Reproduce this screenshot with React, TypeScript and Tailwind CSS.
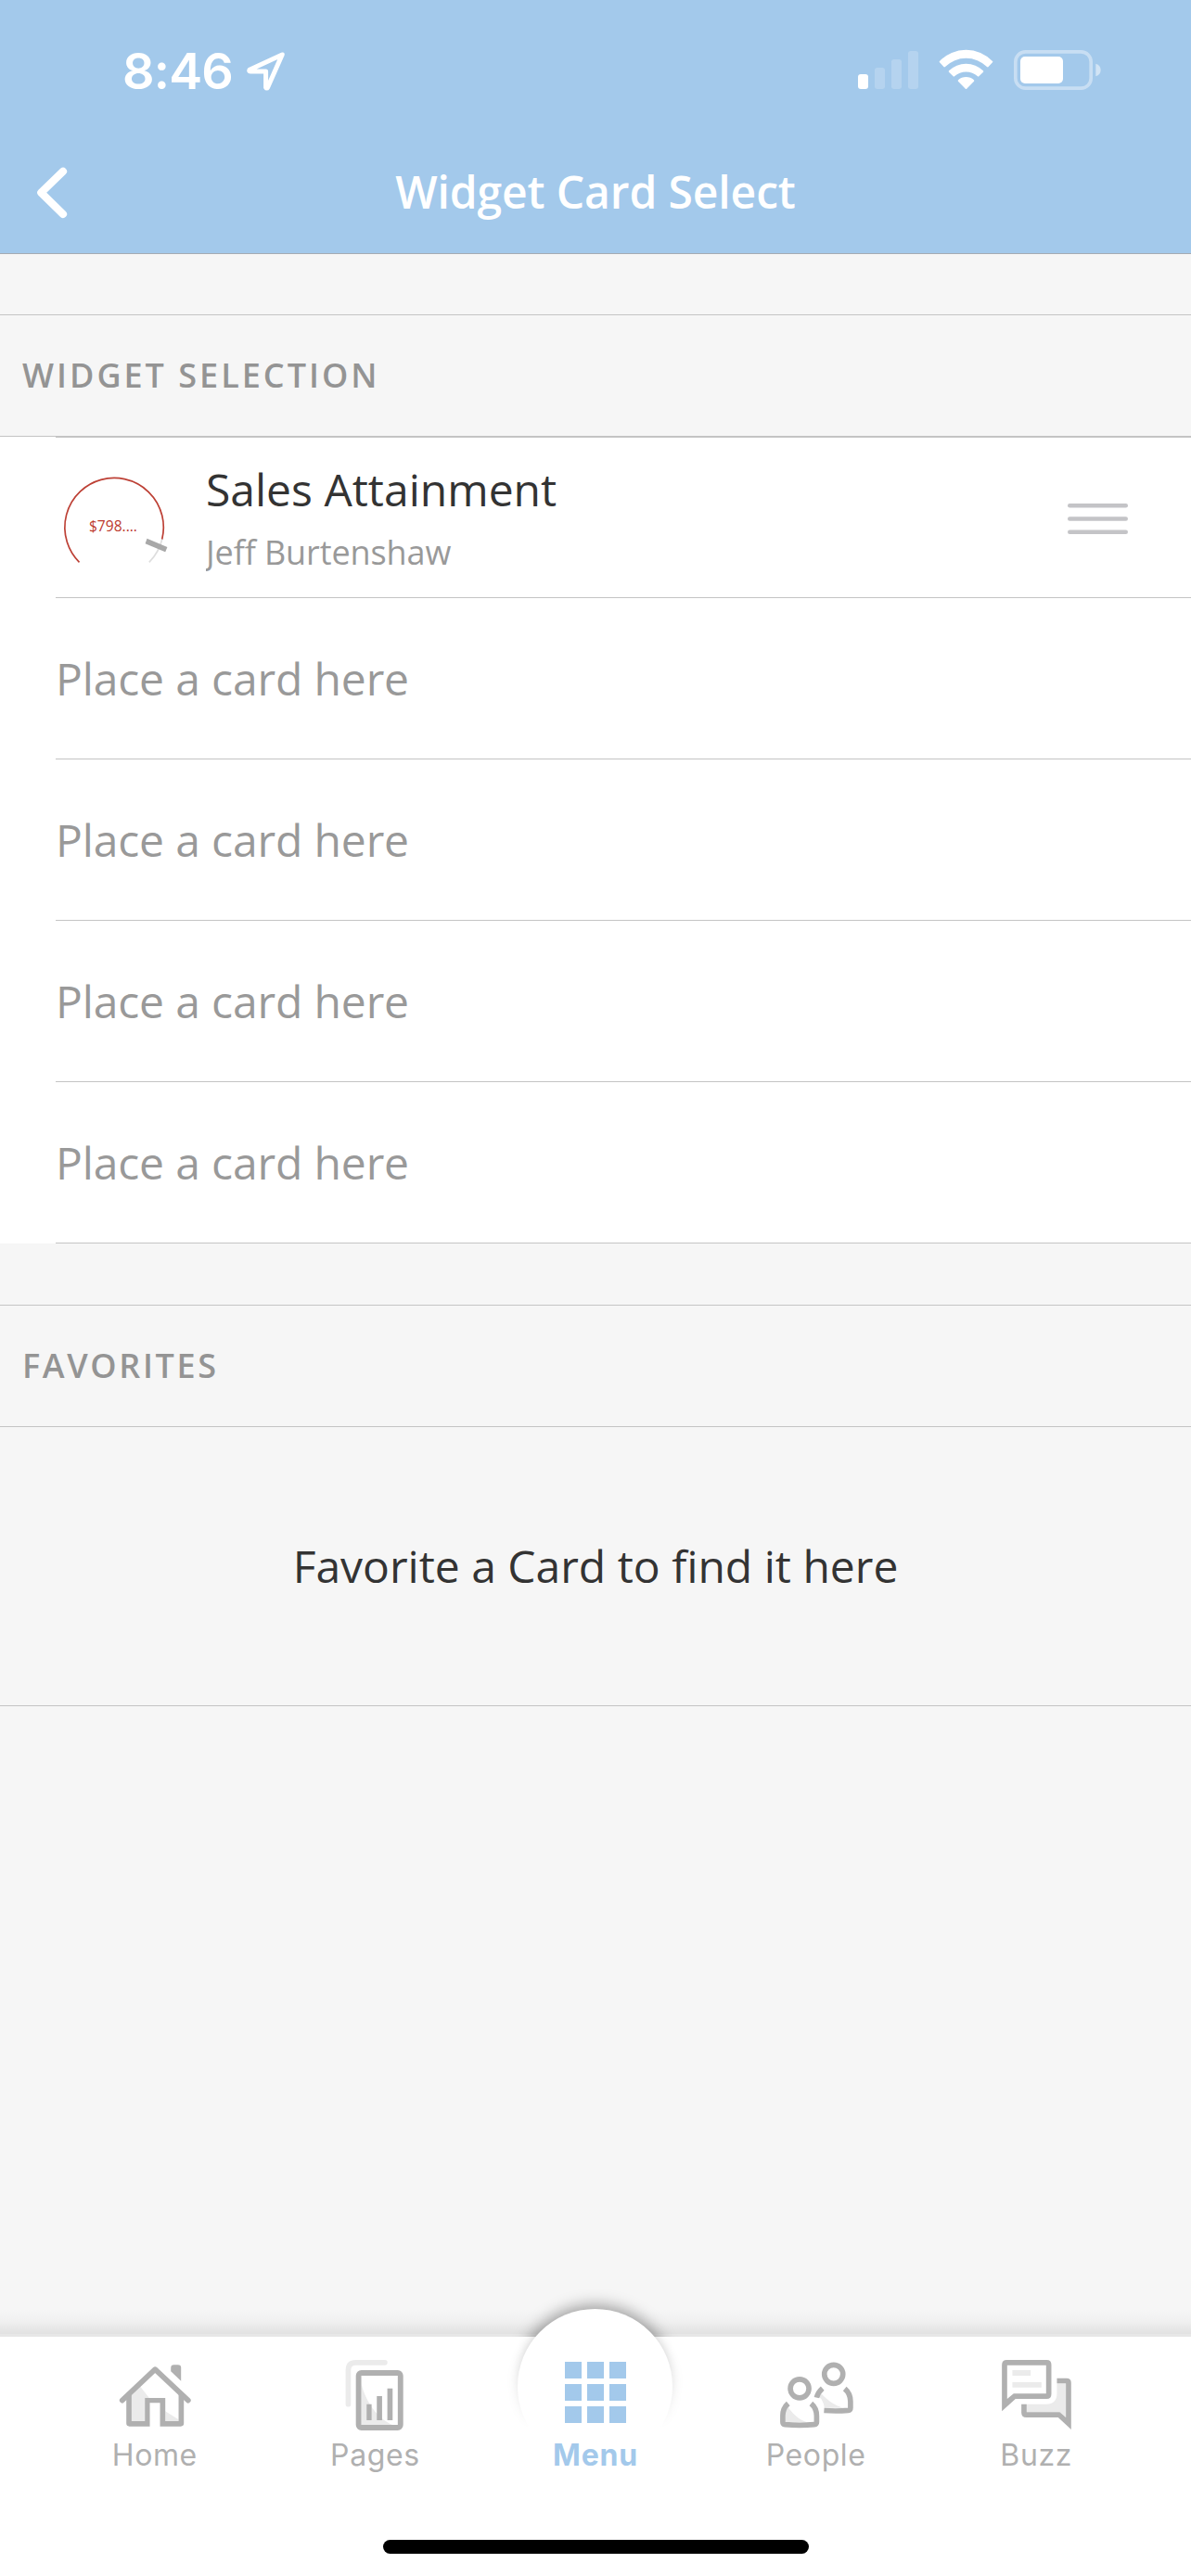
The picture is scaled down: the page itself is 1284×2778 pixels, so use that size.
import type { ReactNode } from "react";

const DARK = "#b0b0b0";
const LIGHT = "#ebebeb";

function LocationArrow() {
  return (
    <svg className="mt-2 ml-[11px] h-[48px] w-[48px]" viewBox="262 52 48 48" fill="none">
      <path
        d="M304.200 58.900 L269 75.200 Q268 76.900 270 77 H286.600 V94.200 Q287.600 96 288.600 94.200 Z"
        stroke="#fff"
        strokeWidth="5"
        strokeLinejoin="round"
      />
    </svg>
  );
}

function StatusIcons() {
  return (
    <svg className="h-[90px] w-[400px]" viewBox="0 0 1200 270" fill="#fff">
      <rect x="285" y="150" width="33" height="48" rx="9" />
      <g opacity="0.2">
        <rect x="339" y="129" width="33" height="69" rx="9" />
        <rect x="393" y="102" width="33" height="96" rx="9" />
        <rect x="447" y="75" width="33" height="123" rx="9" />
      </g>
      <path d="M549 112 Q547 110 549 108 A117.5 117.5 0 0 1 720 108 Q722 110 720 112 L706 127 Q704 128 702 126 A96 96 0 0 0 567 126 Q565 128 563 127 Z" />
      <path d="M579 143 Q577 141 579 139 A79 79 0 0 1 690 139 Q692 141 690 143 L676 157 Q674 159 672 157 A56 56 0 0 0 597 157 Q595 159 593 157 Z" />
      <path d="M609 173 Q607 171 609 169 A38 38 0 0 1 660 169 Q662 171 660 173 L636.5 197 Q634.5 199 632.5 197 Z" />
      <rect x="794.500" y="77.500" width="244" height="118" rx="32" fill="none" stroke="#fff" strokeWidth="11" opacity="0.4" />
      <rect x="810" y="93" width="138" height="87" rx="15" />
      <path d="M1054 116 Q1070 121 1070 136.500 Q1070 152 1054 157 Z" opacity="0.5" />
    </svg>
  );
}

function SectionHeader({ children }: { children: ReactNode }) {
  return (
    <h2 className="h-[132px] border-y border-[#c4c4c4] pt-10 pl-6 text-[36px] leading-[49px] font-semibold tracking-[3px] text-[#949494]">
      {children}
    </h2>
  );
}

function Gauge() {
  return (
    <svg className="h-[172px] w-[130px]" viewBox="60 472 130 172" fill="none">
      <path d="M174.900 581 A53.200 53.200 0 0 1 160.800 606.300" stroke="#dedede" strokeWidth="1.700" />
      <path d="M85.500 606.300 A53.200 53.200 0 1 1 174.700 581.500" stroke="#bd4035" strokeWidth="1.700" />
      <path d="M158.500 580.700 L180.400 590 L178.200 595.200 L156.600 586.200 Z" fill="#a8a8a8" />
      <text x="95.900" y="573.200" fontSize="15.600" fill="#bd3a2e" fontFamily="'Open Sans', sans-serif">
        $798....
      </text>
    </svg>
  );
}

function DragHandle() {
  return (
    <svg className="mt-[71px] mr-[68px] ml-auto h-[34px] w-[65px]" viewBox="0 0 65 34" fill="#c4c4c7">
      <rect x="0" y="0" width="65" height="4.400" rx="2.200" />
      <rect x="0" y="14.300" width="65" height="4.400" rx="2.200" />
      <rect x="0" y="28.600" width="65" height="4.400" rx="2.200" />
    </svg>
  );
}

function HomeIcon() {
  return (
    <svg className="h-[108px] w-[120px]" viewBox="80.4 120 360 324">
      <path d="M185 303 L212 280 L242 318 H228 V393 H185 Z M294 361 L337 388 V393 H294 Z" fill={LIGHT} />
      <path
        d="M168 303 L185 290 V393 H228 V318 H294 V393 H337 V290 L354 303 V400 Q354 410 344 410 H277 V334 H244 V410 H178 Q168 410 168 400 Z"
        fill={DARK}
      />
      <path d="M154.500 326 L261 225.500 L368 326" fill="none" stroke={DARK} strokeWidth="17" strokeLinecap="round" strokeLinejoin="round" />
      <path d="M312 221 Q312 211 322 211 H335 Q345 211 345 221 V263 L312 232 Z" fill={DARK} />
    </svg>
  );
}

function PagesIcon() {
  return (
    <svg className="h-[108px] w-[120px]" viewBox="793.2 120 360 324">
      <path d="M887.500 338 V228 Q887.500 203.500 912 203.500 H1006" fill="none" stroke={LIGHT} strokeWidth="17" strokeLinecap="round" />
      <path d="M930 272 C945 335 985 385 1032 406 H930 Z" fill={LIGHT} />
      <rect x="921" y="237" width="135.500" height="177" rx="9" fill="none" stroke={DARK} strokeWidth="17.500" />
      <path d="M947 338 H963 V390 H947 Z M980 312 H997 V390 H980 Z M1014 287 H1031 V390 H1014 Z" fill={DARK} />
    </svg>
  );
}

function MenuIcon() {
  const steps = [0, 72, 144];
  return (
    <svg className="h-[108px] w-[120px]" viewBox="246 180 360 324" fill="#a3c9eb">
      {steps.map((y) => steps.map((x) => <rect key={`${x}-${y}`} x={327 + x} y={261 + y} width="54" height="54" />))}
    </svg>
  );
}

function PeopleIcon() {
  return (
    <svg className="h-[108px] w-[120px]" viewBox="58.8 120 360 324" fill="none" stroke={DARK} strokeWidth="17">
      <path d="M246 306 L254 303 C275 325 298 343 326 350 H265 Q262 325 246 313 Z" fill={LIGHT} stroke="none" />
      <path d="M138 366 L147 346 C160 368 182 388 207 396 H138 Z" fill={LIGHT} stroke="none" />
      <circle cx="295" cy="241" r="30" />
      <circle cx="185" cy="287.500" r="30" />
      <path d="M148 336 Q130.500 351 130.500 376 V396 Q130.500 403 138 404 Q185 408.500 232 404 Q240 403 240 396 V376 Q240 351 222 336" />
      <path d="M240 317 Q244 300 259 287" />
      <path d="M331 288 Q349.500 304 349.500 329 V350 Q349.500 357 342 358 Q305 361.500 264 358.500" />
    </svg>
  );
}

function BuzzIcon() {
  return (
    <svg className="h-[108px] w-[120px]" viewBox="771.6 120 360 324">
      <path d="M1019 271 H1048 V380 L1028 364 H921 V338 H984 Q1019 338 1019 303 Z M875 228 H934 V246 H875 Z M875 267 H969 V284 H875 Z" fill={LIGHT} />
      <path
        fillRule="evenodd"
        d="M841 361 V211 Q841 195 857 195 H986 Q1001 195 1001 211 V305 Q1001 321 986 321 H885 Z M858 212 V321 L879 304 H984 V212 Z"
        fill={DARK}
      />
      <path d="M1019 254 H1050 Q1065 254 1065 269 V420 L1023 381 H920 Q904 381 904 365 V338 H921 V364 H1028 L1048 381 V271 H1019 Z" fill={DARK} />
    </svg>
  );
}

function Tab({ label, icon, active }: { label: string; icon: ReactNode; active?: boolean }) {
  return (
    <div className="relative flex flex-1 flex-col items-center">
      {icon}
      <span
        className={
          active
            ? "text-[32px] leading-[39px] font-bold tracking-[0.8px] text-[#a3c9eb]"
            : "text-[32px] leading-[39px] tracking-[0.6px] text-[#b0b0b0]"
        }
      >
        {label}
      </span>
    </div>
  );
}

function TabBar() {
  return (
    <nav className="relative mt-auto h-[258px] bg-white font-[Inter,sans-serif]">
      <div className="absolute inset-x-0 -top-[30px] h-[27px] bg-linear-to-b from-transparent via-black/[0.025] to-black/[0.085]" />
      <div className="absolute inset-x-0 -top-[3px] h-[3px] bg-[#e7e7e7]" />
      <div className="absolute -top-[60px] left-[528px] h-[60px] w-[227px] overflow-hidden">
        <div className="mx-auto mt-[30px] h-[167px] w-[167px] rounded-full bg-white shadow-[0_-3px_16px_2px_rgba(0,0,0,0.34)]" />
      </div>
      <div className="absolute top-0 left-[528px] h-[110px] w-[227px] overflow-hidden mask-b-from-10% mask-b-to-90%">
        <div className="mx-auto -mt-[30px] h-[167px] w-[167px] rounded-full bg-white shadow-[0_0_12px_rgba(0,0,0,0.22)]" />
      </div>
      <div className="flex px-12">
        <Tab label="Home" icon={<HomeIcon />} />
        <Tab label="Pages" icon={<PagesIcon />} />
        <Tab label="Menu" icon={<MenuIcon />} active />
        <Tab label="People" icon={<PeopleIcon />} />
        <Tab label="Buzz" icon={<BuzzIcon />} />
      </div>
      <div className="mx-auto mt-[72px] h-[15px] w-[459px] rounded-full bg-black" />
    </nav>
  );
}

export default function App() {
  const emptySlots = [1, 2, 3, 4];
  return (
    <div className="flex h-[2778px] w-[1284px] flex-col overflow-hidden bg-[#f6f6f6] font-['Open_Sans',sans-serif] whitespace-nowrap">
      <header className="h-[274px] border-b border-[#a5abb2] bg-[#a3c9eb] text-white">
        <div className="flex h-[174px] items-start pt-[44px] pr-[54px] pl-[132px]">
          <span className="font-[Inter,sans-serif] text-[54px] leading-[65px] font-semibold tracking-[-0.8px]">8:46</span>
          <LocationArrow />
          <div className="-mt-[14px] ml-auto">
            <StatusIcons />
          </div>
        </div>
        <div className="grid grid-cols-[120px_1fr_120px]">
          <svg className="h-[65px] w-[120px]" viewBox="0 174 120 65" fill="none">
            <path d="M68 184.800 L44.300 207.800 L68 231" stroke="#fff" strokeWidth="8.200" strokeLinecap="round" strokeLinejoin="round" />
          </svg>
          <h1 className="text-center text-[48px] leading-[65px] font-semibold tracking-[-0.12px]">Widget Card Select</h1>
        </div>
      </header>

      <section className="mt-[65px]">
        <SectionHeader>WIDGET SELECTION</SectionHeader>
        <ul className="bg-white pl-[60px]">
          <li className="flex h-[174px] border-y border-[#c4c4c4]">
            <Gauge />
            <div className="ml-8 pt-[23px]">
              <p className="text-[48px] leading-[65px] text-[#333333]">Sales Attainment</p>
              <p className="mt-[11px] overflow-hidden text-[36px] leading-[49px] tracking-[-0.1px] text-[#999999]">Jeff Burtenshaw</p>
            </div>
            <DragHandle />
          </li>
          {emptySlots.map((slot) => (
            <li key={slot} className="flex h-[174px] items-center border-b border-[#c4c4c4] text-[48px] leading-[65px] tracking-[-0.14px] text-[#999999]">
              Place a card here
            </li>
          ))}
        </ul>
      </section>

      <section className="mt-[66px]">
        <SectionHeader>
          <span className="tracking-[2.65px]">FAVORITES</span>
        </SectionHeader>
        <p className="h-[301px] border-b border-[#c4c4c4] pt-[117px] text-center text-[48px] leading-[65px] text-[#333333]">
          Favorite a Card to find it here
        </p>
      </section>

      <TabBar />
    </div>
  );
}
